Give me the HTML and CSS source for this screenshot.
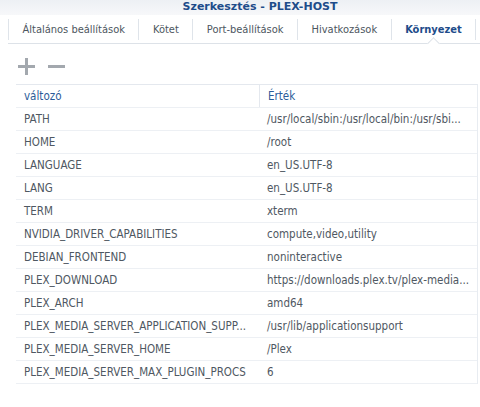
FILE: index.html
```html
<!DOCTYPE html>
<html>
<head>
<meta charset="utf-8">
<link rel="stylesheet" href="styles.css">
</head>
<body>
<div class="titlebar">Szerkesztés - PLEX-HOST</div>
<div class="tabs">
  <div class="tab">Általános beállítások</div>
  <div class="tab">Kötet</div>
  <div class="tab">Port-beállítások</div>
  <div class="tab">Hivatkozások</div>
  <div class="tab active">Környezet</div>
  <div class="tab last"></div>
</div>
<div class="toolbar">
  <svg class="icon" width="17" height="17" viewBox="0 0 17 17"><rect x="0" y="7" width="17" height="3" fill="#a3a8ae"/><rect x="7" y="0" width="3" height="17" fill="#a3a8ae"/></svg>
  <svg class="icon" width="17" height="17" viewBox="0 0 17 17"><rect x="0" y="7" width="17" height="3" fill="#a3a8ae"/></svg>
</div>
<div class="table">
  <div class="row head"><div class="c1">változó</div><div class="c2">Érték</div></div>
  <div class="row"><div class="c1">PATH</div><div class="c2">/usr/local/sbin:/usr/local/bin:/usr/sbi...</div></div>
  <div class="row"><div class="c1">HOME</div><div class="c2">/root</div></div>
  <div class="row"><div class="c1">LANGUAGE</div><div class="c2">en_US.UTF-8</div></div>
  <div class="row"><div class="c1">LANG</div><div class="c2">en_US.UTF-8</div></div>
  <div class="row"><div class="c1">TERM</div><div class="c2">xterm</div></div>
  <div class="row"><div class="c1">NVIDIA_DRIVER_CAPABILITIES</div><div class="c2">compute,video,utility</div></div>
  <div class="row"><div class="c1">DEBIAN_FRONTEND</div><div class="c2">noninteractive</div></div>
  <div class="row"><div class="c1">PLEX_DOWNLOAD</div><div class="c2">https://downloads.plex.tv/plex-media...</div></div>
  <div class="row"><div class="c1">PLEX_ARCH</div><div class="c2">amd64</div></div>
  <div class="row"><div class="c1">PLEX_MEDIA_SERVER_APPLICATION_SUPP...</div><div class="c2">/usr/lib/applicationsupport</div></div>
  <div class="row"><div class="c1">PLEX_MEDIA_SERVER_HOME</div><div class="c2">/Plex</div></div>
  <div class="row"><div class="c1">PLEX_MEDIA_SERVER_MAX_PLUGIN_PROCS</div><div class="c2">6</div></div>
</div>
</body>
</html>
```
FILE: styles.css
```css
html, body {
  margin: 0;
  padding: 0;
  background: #ffffff;
  font-family: "DejaVu Sans Condensed", "DejaVu Sans", sans-serif;
  font-size: 11.5px;
  color: #4f5862;
  width: 480px;
  height: 407px;
  overflow: hidden;
}
.titlebar {
  height: 15px;
  line-height: 14px;
  padding-left: 40px;
  text-align: center;
  font-family: "DejaVu Sans", sans-serif;
  font-weight: bold;
  font-size: 11px;
  color: #1e4c8a;
  background: linear-gradient(#edf0f4, #f7f8fa);
}
.tabs {
  display: flex;
  margin-left: 8px;
  height: 28px;
  border-bottom: 1px solid #dde2e8;
  position: relative;
}
.tab {
  border-left: 1px solid #dfe4ea;
  margin: 4px 0 3px 0;
  padding: 0 13.5px;
  line-height: 21px;
  font-size: 11px;
  color: #4d5660;
  white-space: nowrap;
}
.tab.active {
  color: #1e4c8a;
  font-weight: bold;
  position: relative;
}
.tab.active::after {
  content: "";
  position: absolute;
  left: 50%;
  bottom: -8px;
  width: 8px;
  height: 8px;
  margin-left: -4px;
  background: #fff;
  border-left: 1px solid #dde2e8;
  border-top: 1px solid #dde2e8;
  transform: rotate(45deg);
}
.tab.last {
  padding: 0;
}
.toolbar {
  display: flex;
  gap: 13px;
  padding: 14px 0 0 18px;
  height: 26px;
}
.table {
  margin: 0 2px 0 16px;
  border-top: 1px solid #e4e8ee;
  border-right: 1px solid #e8ecf1;
}
.row {
  display: grid;
  grid-template-columns: 243px 1fr;
  height: 22px;
  line-height: 23px;
  border-bottom: 1px solid #edf0f4;
}
.row.head .c1, .row.head .c2 {
  color: #2b5b99;
}
.row.head .c2 {
  border-left: 1px solid #e4e8ee;
}
.c1, .c2 {
  padding-left: 8px;
  white-space: nowrap;
  overflow: hidden;
}
```
